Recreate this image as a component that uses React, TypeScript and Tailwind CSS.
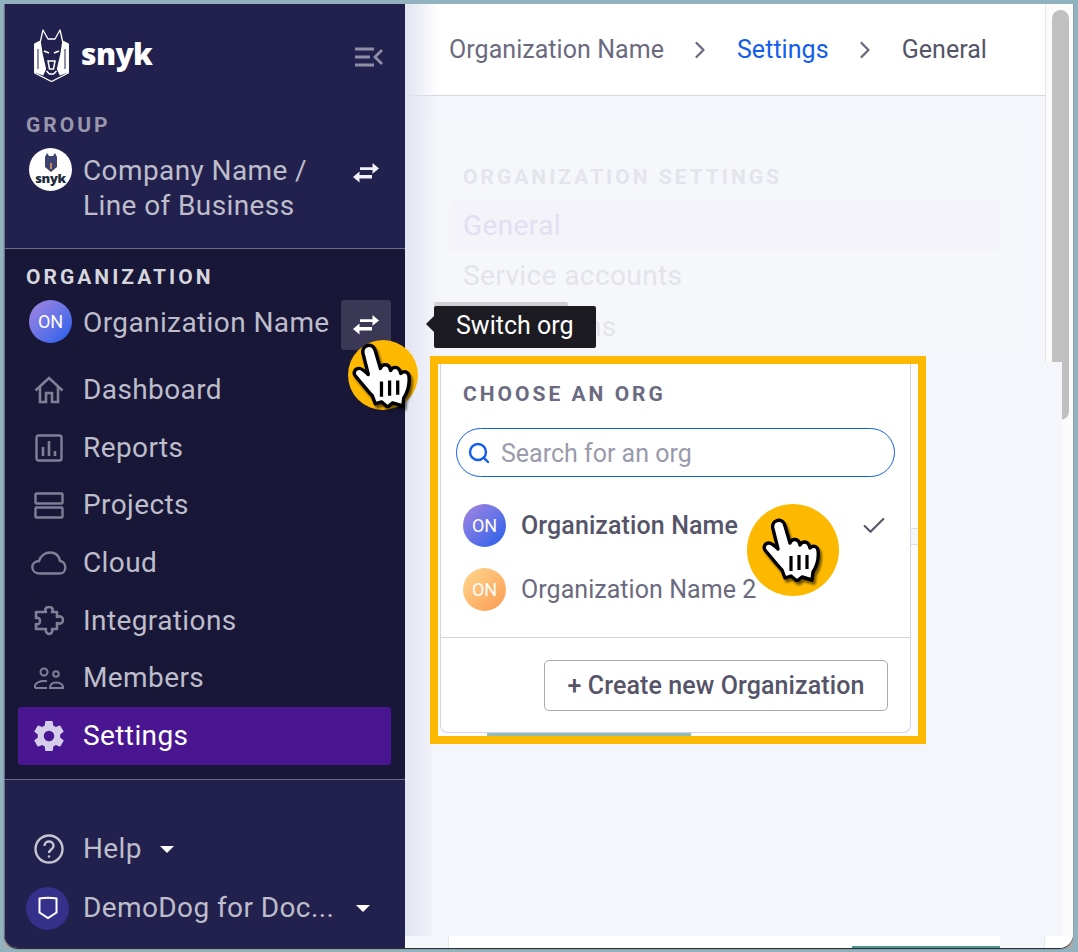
import React from 'react';
import { Check, ChevronRight, Search } from 'lucide-react';

const swapIcon = (
  <svg width="28" height="20" viewBox="0 0 28 20" fill="currentColor">
    <path d="M8 5.2h12.5V1L27 6.6l-6.5 5.1V8H8z" transform="translate(0 -1)" />
    <path d="M20 12H7.5V8.4L1 14l6.5 5.4V15.4H20z" />
  </svg>
);

const Hand = ({ size }: { size: number }) => (
  <svg width={size} height={size} viewBox="0 0 60 64" className="shrink-0 drop-shadow-[2px_3px_1px_rgba(0,0,0,0.55)]">
    <path
      d="M13 3c4-2 8 0 9 5l5 17c1-4 7-5 9-1l1 3c2-4 7-4 9 0l1 3c3-3 7-2 8 2 1 8-1 16-5 22l-1 8-10-3-5 4-6-5-6 2-3-8C14 47 8 39 2 32c-2-3 0-7 4-7 3 0 6 3 9 6L10 11c-1-3 0-7 3-8z"
      fill="#fff"
      stroke="#000"
      strokeWidth="3.4"
      strokeLinejoin="round"
    />
    <path d="M28 38v15M36 37v15M44 37v14" stroke="#000" strokeWidth="3.2" fill="none" />
  </svg>
);

const SnykDog = () => (
  <svg width="35" height="53" viewBox="0 0 35 53" className="shrink-0">
    <path d="M9 1 6.500 12 .7 15v29l16.800 8.500L34.300 44V15l-5.800-3L26 1l-5 9h-7z" fill="#22214d" stroke="#fff" strokeWidth="1.300" strokeLinejoin="round" />
    <path d="M.7 14.500l6-2.500 2 13 3.500 15-3 6.500-8.500-3z" fill="#fff" />
    <path d="M34.300 14.500l-6-2.500-2 13-3.500 15 3 6.500 8.500-3z" fill="#fff" />
    <path d="M4 20v20M31 20v20" stroke="#22214d" strokeWidth="1" />
    <path d="M10 22l5 2M25 22l-5 2" stroke="#fff" strokeWidth="1.800" />
    <path d="M14 32h7l-1.500 8h-4zM12.500 42l3 3h4l3-3" stroke="#fff" strokeWidth="1.500" fill="none" />
  </svg>
);

const Caret = () => <span className="block w-0 h-0 border-x-[7px] border-x-transparent border-t-[7px] border-t-white" />;

const navIcons: Record<string, React.ReactNode> = {
  Dashboard: (
    <svg width="30" height="28" viewBox="0 0 30 28" fill="none" stroke="currentColor" strokeWidth="2.6">
      <path d="M1.500 14.500 15 2l13.500 12.500M6 11v15h6v-9h6v9h6V11" />
    </svg>
  ),
  Reports: (
    <svg width="28" height="28" viewBox="0 0 28 28" fill="none" stroke="currentColor" strokeWidth="2.4">
      <rect x="1.500" y="1.500" width="25" height="25" rx="2" />
      <path d="M8 13v9M14 7v15M20 17v5" strokeWidth="2.6" />
    </svg>
  ),
  Projects: (
    <svg width="30" height="27" viewBox="0 0 30 27" fill="none" stroke="currentColor" strokeWidth="2.4">
      <rect x="1.500" y="1.500" width="27" height="10" rx="1" />
      <rect x="1.500" y="15.500" width="27" height="10" rx="1" />
    </svg>
  ),
  Cloud: (
    <svg width="36" height="24" viewBox="0 0 36 24" fill="none" stroke="currentColor" strokeWidth="2.4">
      <path d="M9 22.500c-10 0-10-12-1-12.500C10 4 15 1.500 19 1.500c5 0 9 3 10 8.500 7 .5 7 12.500 0 12.500z" />
    </svg>
  ),
  Integrations: (
    <svg width="30" height="30" viewBox="0 0 30 30" fill="none" stroke="currentColor" strokeWidth="2.6" strokeLinejoin="round">
      <path d="M8 6h4c-2-4 1-5 3-5s5 1 3 5h5v5c4-2 6 1 6 3s-2 5-6 3v6h-5c1 3-1 5-3 5s-4-3-3-5H2v-5c3 1 4-1 4-3s-1-4-4-3V6z" />
    </svg>
  ),
  Members: (
    <svg width="30" height="22" viewBox="0 0 30 22" fill="none" stroke="currentColor" strokeWidth="2">
      <circle cx="10" cy="5" r="3.500" />
      <circle cx="22" cy="7" r="2.800" />
      <path d="M1 21v-2c0-3 5-5 9-5 1 0 2 0 3 .3M1 21h12M16 21h13v-1c0-3-4-4.500-7-4.500-3 0-6 1.500-6 5.500z" />
    </svg>
  ),
  Settings: (
    <svg width="36" height="36" viewBox="0 0 24 24" fill="currentColor">
      <path d="M19.400 13c.04-.32.1-.66.1-1s-.06-.68-.1-1l2.100-1.650a.5.500 0 0 0 .12-.64l-2-3.460a.5.500 0 0 0-.61-.22l-2.490 1a7.300 7.300 0 0 0-1.690-.98l-.38-2.650A.49.490 0 0 0 14 2h-4a.49.490 0 0 0-.49.420l-.38 2.650c-.61.250-1.170.59-1.690.98l-2.490-1a.5.500 0 0 0-.61.220l-2 3.460a.49.490 0 0 0 .12.640L4.570 11c-.04.320-.07.660-.07 1s.03.680.07 1l-2.110 1.650a.49.490 0 0 0-.12.640l2 3.460c.12.220.39.300.61.220l2.490-1c.52.400 1.080.730 1.690.980l.38 2.650c.03.240.24.420.49.420h4c.25 0 .46-.18.49-.42l.38-2.650c.61-.25 1.170-.59 1.690-.98l2.490 1c.22.090.49 0 .61-.22l2-3.460a.49.490 0 0 0-.12-.64zM12 15.500a3.500 3.500 0 1 1 0-7 3.500 3.500 0 0 1 0 7z" />
    </svg>
  ),
};

const navItems = ['Dashboard', 'Reports', 'Projects', 'Cloud', 'Integrations', 'Members', 'Settings'];

const App: React.FC = () => {
  return (
    <div className="relative w-[1078px] h-[952px] overflow-hidden bg-[#93b2c0] pt-[4px] pb-[4px] pl-[4px] pr-[5px] font-['Roboto',sans-serif]">
      <div className="h-full bg-[#a9a9a9]">
        <div className="flex h-full overflow-hidden rounded-b-[14px] bg-[#fafafa] shadow-[0_1px_1px_#222]">
          {/* Sidebar */}
          <aside className="w-[401px] shrink-0 flex flex-col bg-[#22214d] border-l border-[#6f6e88] text-[#bdbdcb] text-[28px] tracking-[0.4px]">
            <div className="h-[245px] shrink-0 border-b border-[#6f6e88] pl-[21px] pr-[22px]">
              <div className="flex items-center justify-between h-[96px] pt-[6px]">
                <div className="flex items-center gap-[12px] pl-[8px]">
                  <SnykDog />
                  <span className="font-['Open_Sans',sans-serif] font-extrabold text-white text-[30px] tracking-[-0.6px] leading-none pb-[3px]">snyk</span>
                </div>
                <svg width="30" height="20" viewBox="0 0 30 20" className="text-[#8f8ea7] mr-[-1px] mt-[4px]" fill="none" stroke="currentColor" strokeWidth="2.8">
                  <path d="M1 2h19M1 10h15M1 18h19M28 3l-7 7 7 7" />
                </svg>
              </div>
              <div className="font-bold text-[21px] leading-[24px] tracking-[3px] text-[#9897ad] mt-[13px]">GROUP</div>
              <div className="flex items-start mt-[11px] pl-[3px]">
                <div className="w-[43px] h-[43px] rounded-full bg-white flex flex-col items-center justify-end shrink-0 overflow-hidden">
                  <svg width="14" height="20" viewBox="0 0 14 20" className="mb-[-1px]">
                    <path d="M1 5l2-4 2 3h4l2-3 2 4v10l-6 5-6-5z" fill="#3d4270" />
                    <path d="M6 11h2v6H6z" fill="#c58a5c" />
                  </svg>
                  <span className="font-['Open_Sans',sans-serif] font-extrabold text-[13px] leading-[14px] text-[#1c2b3c] mb-[6px] tracking-[-0.3px]">snyk</span>
                </div>
                <div className="ml-[11px] leading-[34.5px] flex-1 mt-[6px]">
                  Company Name /<br />Line of Business
                </div>
                <div className="text-[#f0f0f5] mt-[15px] mr-[3px]">{swapIcon}</div>
              </div>
            </div>

            <div className="h-[531px] shrink-0 bg-[#181737] border-b border-[#6f6e88]">
              <div className="font-bold text-[21px] leading-[24px] tracking-[3px] text-[#d6d6de] pl-[21px] pt-[16px]">ORGANIZATION</div>
              <div className="flex items-start pl-[24px] pr-[14px] mt-[11px] h-[51px]">
                <div className="w-[43px] h-[43px] rounded-full bg-gradient-to-br from-[#a585e0] to-[#145deb] text-white text-[18px] tracking-normal flex items-center justify-center shrink-0">ON</div>
                <span className="ml-[11px] flex-1 mt-[4px] leading-[38px] whitespace-nowrap">Organization Name</span>
                <div className="w-[50px] h-[50px] shrink-0 rounded-[3px] bg-[#3a3855] text-white flex items-center justify-center">{swapIcon}</div>
              </div>
              <nav className="pl-[13px] pr-[14px] mt-[10px]">
                {navItems.map((item) => {
                  const active = item === 'Settings';
                  return (
                    <div key={item} className={`flex items-center h-[57.7px] rounded-[3px] ${active ? 'bg-[#4a1590] text-white' : ''}`}>
                      <span className={`w-[62px] mr-[3px] flex justify-center shrink-0 ${active ? 'text-[#d6cdea]' : 'text-[#807f96]'}`}>{navIcons[item]}</span>
                      {item}
                    </div>
                  );
                })}
              </nav>
            </div>

            <div className="flex-1">
              <div className="flex items-center h-[58px] mt-[40px] pl-[29px]">
                <svg width="30" height="30" viewBox="0 0 30 30" fill="none" stroke="#c5c5d2" strokeWidth="2.4">
                  <circle cx="15" cy="15" r="13.500" />
                  <path d="M10.500 12c0-6 9-6 9 0 0 3.500-4.500 3.500-4.500 7" />
                  <circle cx="15" cy="22.500" r="1.200" fill="#c5c5d2" stroke="none" />
                </svg>
                <span className="ml-[19px]">Help</span>
                <span className="ml-[18px]"><Caret /></span>
              </div>
              <div className="flex items-center h-[58px] mt-[1px] pl-[21px]">
                <div className="w-[43px] h-[43px] rounded-full bg-[#35308a] flex items-center justify-center shrink-0">
                  <svg width="20" height="24" viewBox="0 0 20 24" fill="none" stroke="#fff" strokeWidth="2">
                    <path d="M1.500 2.500Q10 1 18.500 2.500v14L10 22l-8.500-5.500z" />
                  </svg>
                </div>
                <span className="ml-[14px] w-[273px] whitespace-nowrap">DemoDog for Doc...</span>
                <Caret />
              </div>
            </div>
          </aside>

          {/* Main */}
          <main className="flex-1 flex flex-col min-w-0">
            <div className="flex flex-1 min-h-0">
              <div className="w-[640px] flex flex-col">
                <header className="h-[92px] shrink-0 bg-white border-b border-[#d5d6e1] flex items-center pl-[44px] text-[25px] tracking-[0.05px] text-[#6b6a80]">
                  <span>Organization Name</span>
                  <ChevronRight className="w-[28px] h-[28px] mx-[22.5px] text-[#6b6a80]" strokeWidth={2} />
                  <span className="text-[#145deb]">Settings</span>
                  <ChevronRight className="w-[28px] h-[28px] mx-[22.5px] text-[#6b6a80]" strokeWidth={2} />
                  <span className="text-[#555468]">General</span>
                </header>
                <div className="flex-1 bg-[#f5f6fb] pl-[17px] pt-[26px]">
                  <div className="w-[600px] bg-[#f6f7fb] pl-[27px] pt-[43px] pr-[20px]">
                    <div className="font-bold text-[21px] leading-[24px] tracking-[3px] text-[#e4e5ec] pl-[14px]">ORGANIZATION SETTINGS</div>
                    <div className="mt-[11px] h-[50px] w-[552px] bg-[#f3f3f9] rounded-[3px] text-[28px] tracking-[0.4px] text-[#e1dff0] flex items-center pl-[14px] pt-[1px]">General</div>
                    <div className="h-[51px] text-[28px] tracking-[0.4px] text-[#e3e4ea] flex items-center pl-[14px]">Service accounts</div>
                    <div className="h-[51px] text-[28px] tracking-[0.4px] text-[#e3e4ea] flex items-center pl-[14px]">Integrations</div>
                  </div>
                </div>
              </div>
              <div className="flex-1 border-l border-[#e6e7ee] bg-[#fbfbfb] pt-[6px] pl-[6px]">
                <div className="w-[17px] h-[410px] rounded-full bg-[#c0c0c0]" />
              </div>
            </div>
            <div className="h-[12px] shrink-0 flex bg-white">
              <div className="w-[44px] bg-[#f5f6fb] border-r border-[#e6e7ee]" />
              <div className="w-[551px] flex items-end justify-end">
                <div className="w-[148px] h-[2px] bg-[#4a9a94]" />
              </div>
              <div className="w-[45px] bg-[#f5f6fb] border-r border-[#e6e7ee]" />
            </div>
          </main>
        </div>
      </div>

      {/* sidebar edge shadow */}
      <div className="absolute left-[405px] top-[4px] w-[34px] h-[932px] bg-gradient-to-r from-[#e2e4f1] to-transparent pointer-events-none" />

      {/* Faded layer covering the page under the picker */}
      <div className="absolute left-[432px] top-[362px] w-[630px] h-[574px] bg-[#f5f6fb]" />

      {/* Tooltip */}
      <div className="absolute left-[434px] top-[302px] w-[134px] h-[6px] bg-[#d0d0d4] rounded-t-[2px]" />
      <div className="absolute left-[434px] top-[306px] w-[162px] h-[42px] bg-[#1c1b22] rounded-[2px] text-white text-[25px] flex items-center pl-[22px] pb-[2px]">
        Switch org
        <span className="absolute left-[-8px] top-[10px] w-0 h-0 border-y-[8px] border-y-transparent border-r-[8px] border-r-[#1c1b22]" />
      </div>

      {/* Org picker */}
      <div className="absolute left-[430px] top-[356px] w-[496px] h-[388px] border-[8px] border-[#fdb900] bg-[#fcfcfe] overflow-hidden">
        <div className="absolute left-[473px] top-[164px] w-[8px] h-[17px] border-y border-[#dcdce3] bg-[#f5f6fb]" />
        <div className="absolute left-[49px] top-[369px] w-[204px] h-[3px] bg-[#8fbcb8]" />
        <div className="ml-[2px] w-[471px] h-[369px] bg-white border-x border-b border-[#d5d5dd] rounded-b-[8px] flex flex-col">
          <div className="pl-[22px] pt-[17px] font-bold text-[21px] leading-[26px] tracking-[3px] text-[#6b6a80]">CHOOSE AN ORG</div>
          <div className="ml-[15px] mt-[21px] w-[439px] h-[49px] rounded-full border border-[#145deb] flex items-center pl-[10px]">
            <Search className="w-[24px] h-[24px] text-[#145deb]" strokeWidth={2.4} />
            <span className="ml-[10px] text-[25px] text-[#9a9aab] pt-[2px]">Search for an org</span>
          </div>
          <div className="flex items-center ml-[22px] mt-[27px] h-[43px]">
            <div className="w-[43px] h-[43px] rounded-full bg-gradient-to-br from-[#a585e0] to-[#145deb] text-white text-[18px] flex items-center justify-center">ON</div>
            <span className="ml-[15px] font-medium text-[25px] tracking-[0.1px] text-[#555468] flex-1">Organization Name</span>
            <Check className="w-[28px] h-[28px] text-[#555468] mr-[22px]" strokeWidth={1.8} />
          </div>
          <div className="flex items-center ml-[22px] mt-[21px] h-[43px]">
            <div className="w-[43px] h-[43px] rounded-full bg-gradient-to-br from-[#fdd78f] to-[#fb9a50] text-white text-[18px] flex items-center justify-center">ON</div>
            <span className="ml-[15px] text-[25px] tracking-[0.05px] text-[#6b6a80]">Organization Name 2</span>
          </div>
          <div className="mt-[26px] border-t border-[#d5d5dd]" />
          <div className="flex justify-end pr-[22px] pt-[22px]">
            <div className="w-[344px] h-[51px] rounded-[5px] border border-[#a9a9b5] flex items-center justify-center font-medium text-[25px] tracking-[0.1px] text-[#555468]">+ Create new Organization</div>
          </div>
        </div>
      </div>

      {/* Cursor markers */}
      <div className="absolute left-[348px] top-[340px] w-[70px] h-[70px] rounded-full bg-[#fdb900] flex items-center justify-center">
        <Hand size={65} />
      </div>
      <div className="absolute left-[747px] top-[504px] w-[92px] h-[92px] rounded-full bg-[#fdb900] flex items-center justify-center">
        <Hand size={64} />
      </div>
    </div>
  );
};

export default App;
